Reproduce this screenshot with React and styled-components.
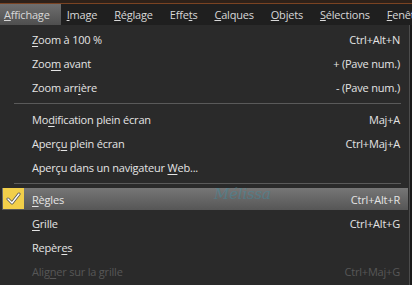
import styled, { createGlobalStyle } from 'styled-components';

const GlobalStyle = createGlobalStyle`
  html, body {
    margin: 0;
    padding: 0;
    background: #1c1c1c;
  }
  body {
    font-family: "Open Sans", "Noto Sans", sans-serif;
    font-size: 11px;
    letter-spacing: -0.2px;
    color: #dedede;
  }
`;

const Window = styled.div`
  width: 412px;
  height: 285px;
  overflow: hidden;
  background: #1c1c1c;
`;

const TopStrip = styled.div`
  height: 3px;
  background: #2e2119;
  border-bottom: 1px solid #7a4322;
`;

const MenuBar = styled.div`
  display: flex;
  gap: 2px;
  height: 21px;
  background: #1f1f1f;
  white-space: nowrap;
  overflow: hidden;
`;

const BarItem = styled.div`
  display: flex;
  align-items: center;
  flex-shrink: 0;
  padding: 0 11px 0 4px;
  color: #d8d8d8;
  background: ${(p) => (p.active ? 'linear-gradient(#6e6e6e, #4f4f4f)' : 'transparent')};
`;

const Body = styled.div`
  display: flex;
  height: 261px;
`;

const Dropdown = styled.div`
  position: relative;
  display: flex;
  flex-direction: column;
  width: 409px;
  padding-top: 2px;
  background: #2a2a2a;
  border-right: 1px solid #4c4c4c;
`;

const Row = styled.div`
  position: relative;
  display: grid;
  grid-template-columns: 30px 1fr auto;
  align-items: center;
  flex-shrink: 0;
  height: 22px;
  margin: 1px 1px 1px 2px;
  padding-right: 8px;
  color: ${(p) => (p.disabled ? '#575757' : '#e4e4e4')};
  background: ${(p) => (p.selected ? 'linear-gradient(#767676, #565656)' : 'transparent')};
`;

const Label = styled.span`
  grid-column: 2;
  u {
    text-decoration: underline;
    text-underline-offset: 2px;
  }
`;

const Shortcut = styled.span`
  grid-column: 3;
  text-align: right;
`;

const Separator = styled.div`
  flex-shrink: 0;
  height: 1px;
  margin: 4px 8px 3px 14px;
  background: #5a5a5a;
`;

const CheckBox = styled.div`
  position: absolute;
  left: 1px;
  top: 0;
  width: 21px;
  height: 21px;
  display: flex;
  align-items: center;
  justify-content: center;
  background: #f2cf4a;
`;

const Watermark = styled.span`
  position: absolute;
  left: 214px;
  top: 160px;
  font-family: "DejaVu Serif", serif;
  font-style: italic;
  font-size: 15px;
  color: #3d8ea3;
  opacity: 0.45;
  pointer-events: none;
`;

const Gutter = styled.div`
  flex: 1;
  background: #1a1a1a;
`;

function Check() {
  return (
    <svg width="15" height="13" viewBox="0 0 15 13">
      <path d="M2 7 L6 11 L13 2" fill="none" stroke="#555" strokeWidth="3" strokeLinecap="round" strokeLinejoin="round" />
      <path d="M2 7 L6 11 L13 2" fill="none" stroke="#fff" strokeWidth="1.4" strokeLinecap="round" strokeLinejoin="round" />
    </svg>
  );
}

export default function App() {
  return (
    <Window>
      <GlobalStyle />
      <TopStrip />
      <MenuBar>
        <BarItem active><span><u>A</u>ffichage</span></BarItem>
        <BarItem><span><u>I</u>mage</span></BarItem>
        <BarItem><span><u>R</u>églage</span></BarItem>
        <BarItem><span>Effe<u>t</u>s</span></BarItem>
        <BarItem><span><u>C</u>alques</span></BarItem>
        <BarItem><span><u>O</u>bjets</span></BarItem>
        <BarItem><span><u>S</u>élections</span></BarItem>
        <BarItem><span><u>F</u>enêtre</span></BarItem>
      </MenuBar>
      <Body>
        <Dropdown>
          <Row>
            <Label><u>Z</u>oom à 100 %</Label>
            <Shortcut>Ctrl+Alt+N</Shortcut>
          </Row>
          <Row>
            <Label>Zoo<u>m</u> avant</Label>
            <Shortcut>+ (Pave num.)</Shortcut>
          </Row>
          <Row>
            <Label>Zoom arr<u>i</u>ère</Label>
            <Shortcut>- (Pave num.)</Shortcut>
          </Row>
          <Separator />
          <Row>
            <Label>Mo<u>d</u>ification plein écran</Label>
            <Shortcut>Maj+A</Shortcut>
          </Row>
          <Row>
            <Label>Aperç<u>u</u> plein écran</Label>
            <Shortcut>Ctrl+Maj+A</Shortcut>
          </Row>
          <Row>
            <Label>Aperçu dans un navigateur <u>W</u>eb...</Label>
          </Row>
          <Separator />
          <Row selected>
            <CheckBox><Check /></CheckBox>
            <Label><u>R</u>ègles</Label>
            <Shortcut>Ctrl+Alt+R</Shortcut>
          </Row>
          <Row>
            <Label><u>G</u>rille</Label>
            <Shortcut>Ctrl+Alt+G</Shortcut>
          </Row>
          <Row>
            <Label>Repèr<u>e</u>s</Label>
          </Row>
          <Row disabled>
            <Label>Alig<u>n</u>er sur la grille</Label>
            <Shortcut>Ctrl+Maj+G</Shortcut>
          </Row>
          <Watermark>Mélissa</Watermark>
        </Dropdown>
        <Gutter />
      </Body>
    </Window>
  );
}
